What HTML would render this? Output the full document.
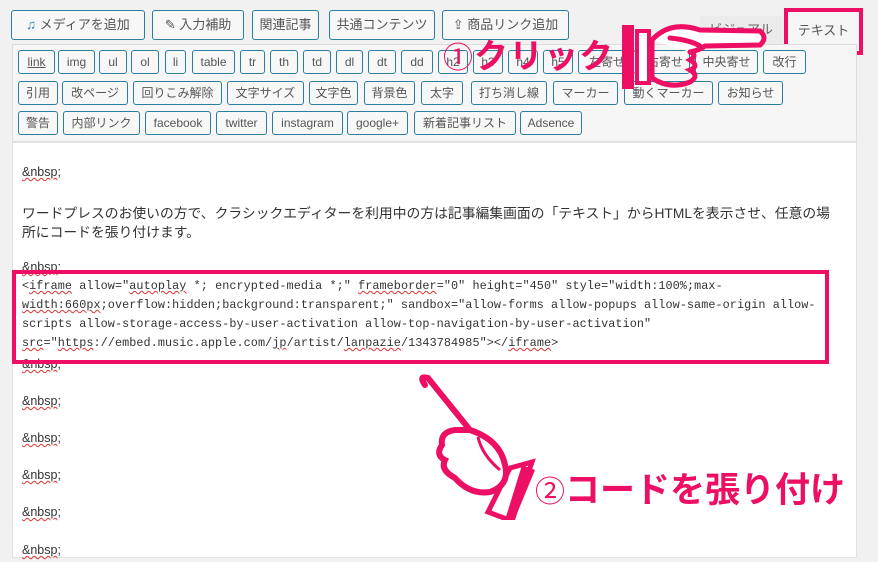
<!DOCTYPE html>
<html><head><meta charset="utf-8"><style>
*{margin:0;padding:0;box-sizing:border-box}
body{width:878px;height:562px;overflow:hidden;background:#f1f1f1;position:relative;font-family:"Liberation Sans","Noto Sans CJK JP",sans-serif;}
.b{position:absolute;height:24px;border:1px solid #2a7ea0;border-radius:3px;background:#f7f7f7;color:#555;font-size:12px;line-height:22px;text-align:center;white-space:nowrap;}
.t{position:absolute;height:30px;border:1px solid #2a7ea0;border-radius:3px;background:#f7f7f7;color:#555;font-size:13px;line-height:28px;text-align:center;top:10px}
#tool{position:absolute;left:12px;top:44px;width:845px;height:98px;background:#f6f6f6;border:1px solid #ddd}
#ed{position:absolute;left:12px;top:142px;width:845px;height:416px;background:#fff;border:1px solid #e2e2e2}
.ln{position:absolute;left:22px;font-size:12.5px;color:#333;white-space:nowrap}
.m{font-family:"Liberation Mono",monospace;font-size:11.8px;letter-spacing:0.07px}
u{text-decoration:underline wavy #d33;text-decoration-thickness:1px}
.pk{color:#ec0f63;font-weight:bold;position:absolute;white-space:nowrap;font-family:"Noto Sans CJK JP",sans-serif}
</style></head><body>
<div class="t" style="left:11px;width:134px"><span style="color:#2a7ea0;font-weight:bold">♫</span> メディアを追加</div>
<div class="t" style="left:152px;width:92px">✎ 入力補助</div>
<div class="t" style="left:252px;width:67px">関連記事</div>
<div class="t" style="left:329px;width:106px">共通コンテンツ</div>
<div class="t" style="left:442px;width:127px">⇪ 商品リンク追加</div>
<div style="position:absolute;left:700px;top:16px;width:82px;height:28px;background:#ebebeb;color:#666;font-size:13px;line-height:28px;text-align:center">ビジュアル</div>
<div style="position:absolute;left:784px;top:8px;width:79px;height:47px;border:4px solid #ec0f63;background:#f5f5f5;color:#555;font-size:13px;line-height:38px;text-align:center">テキスト</div>
<div id="tool"></div>
<div class="b" style="left:18px;top:50px;width:37px;text-decoration:underline">link</div>
<div class="b" style="left:58px;top:50px;width:37px">img</div>
<div class="b" style="left:99px;top:50px;width:28px">ul</div>
<div class="b" style="left:131px;top:50px;width:28px">ol</div>
<div class="b" style="left:165px;top:50px;width:21px">li</div>
<div class="b" style="left:192px;top:50px;width:43px">table</div>
<div class="b" style="left:240px;top:50px;width:25px">tr</div>
<div class="b" style="left:270px;top:50px;width:28px">th</div>
<div class="b" style="left:303px;top:50px;width:28px">td</div>
<div class="b" style="left:336px;top:50px;width:27px">dl</div>
<div class="b" style="left:368px;top:50px;width:28px">dt</div>
<div class="b" style="left:401px;top:50px;width:32px">dd</div>
<div class="b" style="left:438px;top:50px;width:30px">h2</div>
<div class="b" style="left:473px;top:50px;width:30px">h3</div>
<div class="b" style="left:508px;top:50px;width:30px">h4</div>
<div class="b" style="left:543px;top:50px;width:30px">h5</div>
<div class="b" style="left:578px;top:50px;width:58px">左寄せ</div>
<div class="b" style="left:640px;top:50px;width:50px">右寄せ</div>
<div class="b" style="left:695px;top:50px;width:63px">中央寄せ</div>
<div class="b" style="left:763px;top:50px;width:43px">改行</div>
<div class="b" style="left:18px;top:81px;width:40px">引用</div>
<div class="b" style="left:62px;top:81px;width:66px">改ページ</div>
<div class="b" style="left:133px;top:81px;width:89px">回りこみ解除</div>
<div class="b" style="left:227px;top:81px;width:77px">文字サイズ</div>
<div class="b" style="left:309px;top:81px;width:49px">文字色</div>
<div class="b" style="left:364px;top:81px;width:51px">背景色</div>
<div class="b" style="left:421px;top:81px;width:42px">太字</div>
<div class="b" style="left:471px;top:81px;width:76px">打ち消し線</div>
<div class="b" style="left:553px;top:81px;width:65px">マーカー</div>
<div class="b" style="left:624px;top:81px;width:89px">動くマーカー</div>
<div class="b" style="left:718px;top:81px;width:65px">お知らせ</div>
<div class="b" style="left:18px;top:111px;width:40px">警告</div>
<div class="b" style="left:63px;top:111px;width:77px">内部リンク</div>
<div class="b" style="left:145px;top:111px;width:66px">facebook</div>
<div class="b" style="left:216px;top:111px;width:51px">twitter</div>
<div class="b" style="left:272px;top:111px;width:71px">instagram</div>
<div class="b" style="left:347px;top:111px;width:61px">google+</div>
<div class="b" style="left:414px;top:111px;width:102px">新着記事リスト</div>
<div class="b" style="left:520px;top:111px;width:62px">Adsence</div>
<div id="ed"></div>
<div class="ln" style="top:165px"><u>&amp;nbsp</u>;</div>
<div class="ln" style="top:202px;font-size:13.8px">ワードプレスのお使いの方で、クラシックエディターを利用中の方は記事編集画面の「テキスト」からHTMLを表示させ、任意の場</div>
<div class="ln" style="top:221px;font-size:13.8px">所にコードを張り付けます。</div>
<div class="ln" style="top:260px"><u>&amp;nbsp</u>;</div>
<div class="ln m" style="top:279px">&lt;<u>iframe</u> allow="<u>autoplay</u> *; encrypted-media *;" <u>frameborder</u>="0" height="450" style="width:100%;max-</div>
<div class="ln m" style="top:298px"><u>width:660px</u>;overflow:hidden;background:transparent;" sandbox="allow-forms allow-popups allow-same-origin allow-</div>
<div class="ln m" style="top:317px">scripts allow-storage-access-by-user-activation allow-top-navigation-by-user-activation"</div>
<div class="ln m" style="top:336px"><u>src</u>="<u>https</u>://embed.music.apple.com/<u>jp</u>/artist/<u>lanpazie</u>/1343784985"&gt;&lt;/<u>iframe</u>&gt;</div>
<div class="ln" style="top:357px"><u>&amp;nbsp</u>;</div>
<div class="ln" style="top:394px"><u>&amp;nbsp</u>;</div>
<div class="ln" style="top:431px"><u>&amp;nbsp</u>;</div>
<div class="ln" style="top:468px"><u>&amp;nbsp</u>;</div>
<div class="ln" style="top:505px"><u>&amp;nbsp</u>;</div>
<div class="ln" style="top:543px"><u>&amp;nbsp</u>;</div>
<div style="position:absolute;left:12px;top:270px;width:817px;height:94px;border:4px solid #ec0f63"></div>
<div class="pk" style="left:443px;top:30px;font-size:34px;line-height:48px;letter-spacing:1px"><span style="font-weight:normal;font-size:30px">①</span>クリック</div>
<svg style="position:absolute;left:615px;top:20px" width="160" height="75" viewBox="615 20 160 75">
<rect x="622" y="25" width="12" height="64" fill="#ec0f63"/>
<rect x="637" y="31" width="12" height="52" fill="#fff" stroke="#ec0f63" stroke-width="4"/>
<path d="M652 40 Q670 20 700 30 L760 31 Q768 38 760 45 L705 46 Q700 50 690 52 M670 38 Q690 40 700 46" fill="#fff" stroke="#ec0f63" stroke-width="5" stroke-linecap="round"/>
<path d="M652 40 L652 78 Q670 90 690 82 Q700 76 690 70 Q700 66 690 60 Q698 55 690 52" fill="none" stroke="#ec0f63" stroke-width="5" stroke-linecap="round"/>
</svg>
<svg style="position:absolute;left:410px;top:370px" width="130" height="150" viewBox="410 370 130 150">
<path d="M425 385 Q418 375 428 378 L470 430" fill="none" stroke="#ec0f63" stroke-width="6" stroke-linecap="round"/>
<path d="M470 430 Q500 440 505 465 Q510 485 490 492 Q470 495 455 478 Q440 470 445 460 Q435 455 442 445 Q440 432 455 430 Z" fill="#fff" stroke="#ec0f63" stroke-width="6"/>
<path d="M478 437 Q482 455 500 470" fill="none" stroke="#ec0f63" stroke-width="3"/>
<path d="M510 468 L532 462 L512 521 L488 512 Z" fill="none" stroke="#ec0f63" stroke-width="5"/>
<path d="M522 465 L535 470 L513 523 L505 520 Z" fill="#ec0f63"/>
</svg>
<div class="pk" style="left:535px;top:463px;font-size:35px;line-height:50px"><span style="font-weight:normal;font-size:30px">②</span>コードを張り付け</div>
</body></html>
